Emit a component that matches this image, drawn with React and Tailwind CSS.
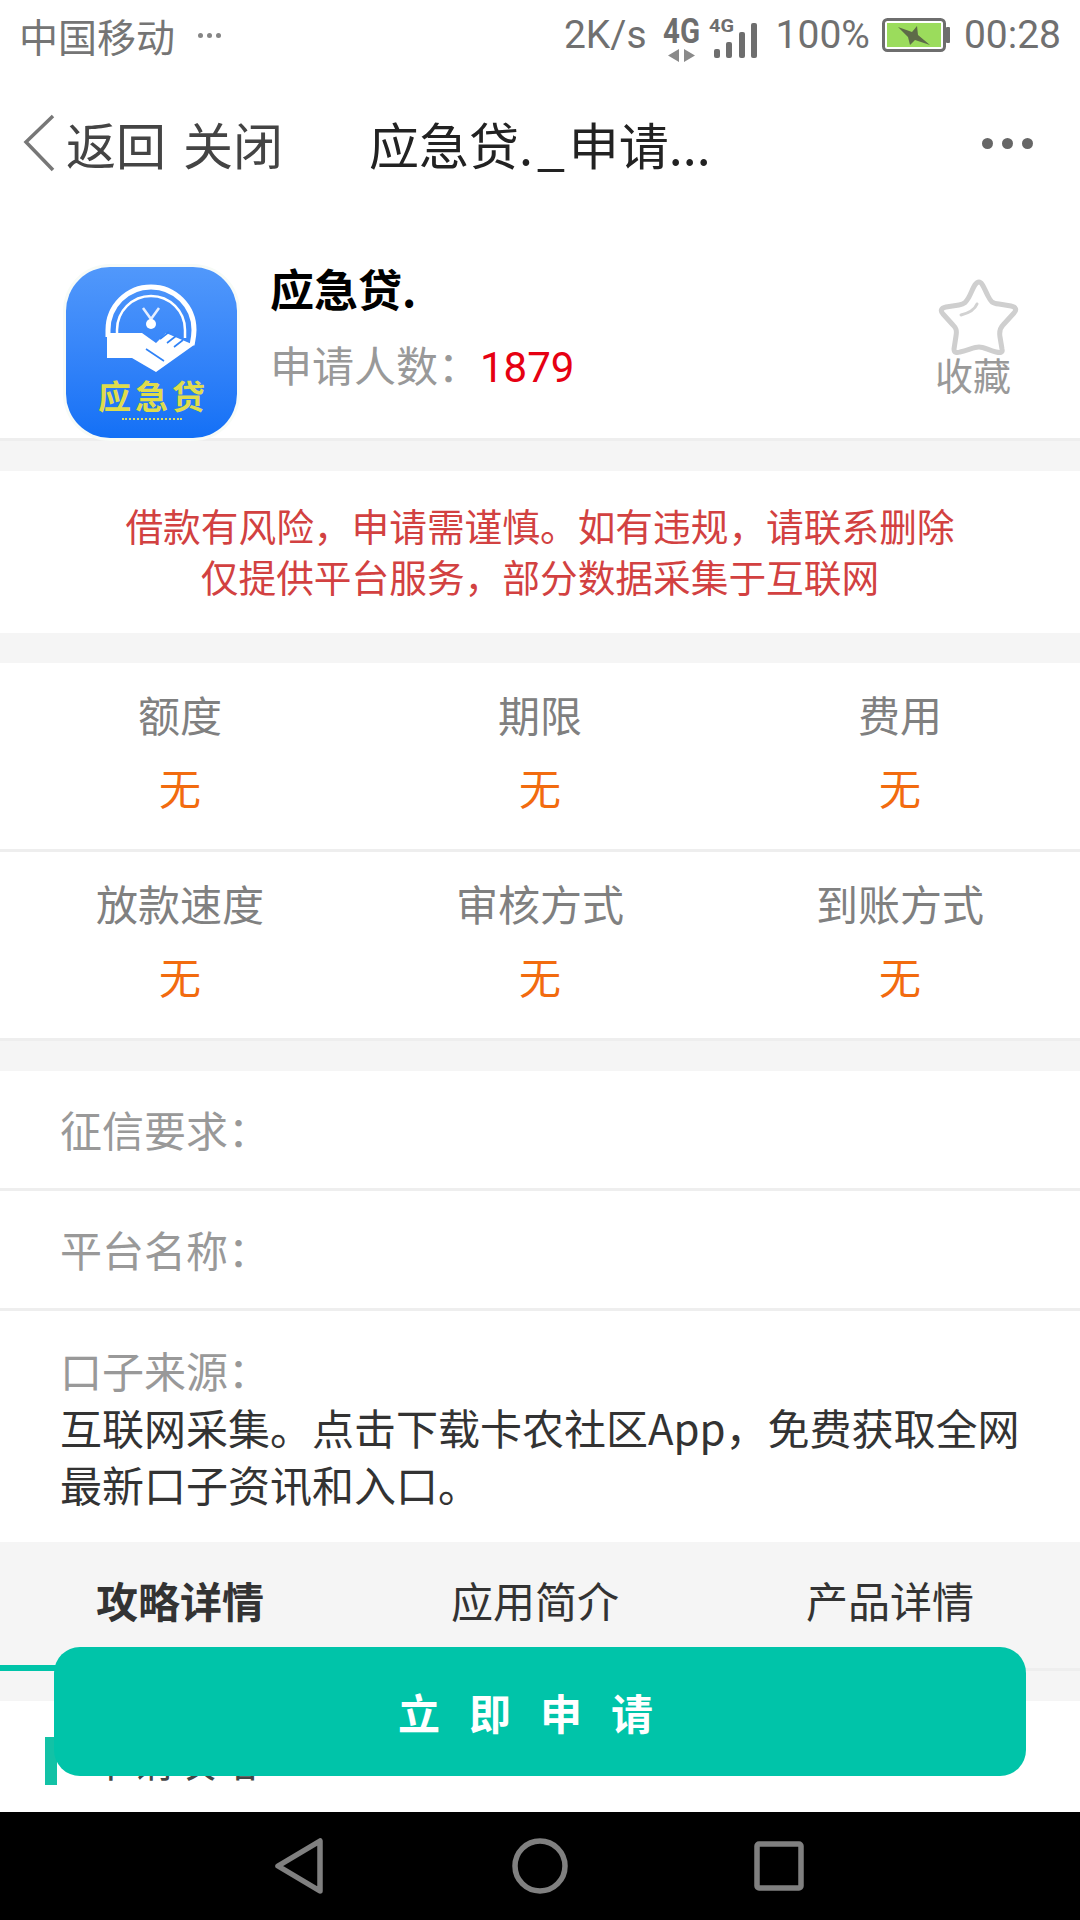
import React from 'react';

const SANS = 'font-["Noto_Sans_CJK_SC","Noto_Sans",sans-serif]';

const terms = [
  ['额度', '期限', '费用'],
  ['放款速度', '审核方式', '到账方式'],
];

function StatusBar() {
  return (
    <div className="h-[70px] flex items-center text-[#757575] shrink-0">
      <span className="ml-[19px] text-[39px] leading-none">中国移动</span>
      <div className="ml-[23px] flex gap-[4px]">
        <i className="w-[5px] h-[5px] rounded-full bg-[#858585]" />
        <i className="w-[5px] h-[5px] rounded-full bg-[#858585]" />
        <i className="w-[5px] h-[5px] rounded-full bg-[#858585]" />
      </div>
      <div className="ml-auto flex items-center font-['Roboto',sans-serif] text-[39px] leading-none text-[#707070]">
        <span>2K/s</span>
        <svg className="ml-[14px]" width="100" height="60" viewBox="0 0 100 60" fill="#6e6e6e">
          <text x="2" y="38" fontFamily="Roboto" fontWeight="700" fontSize="35" textLength="37" lengthAdjust="spacingAndGlyphs">4G</text>
          <path d="M18 44v13l-11-6.500zM23 44v13l11-6.500z" fill="#8a8a8a" />
          <text x="48" y="27" fontFamily="Roboto" fontWeight="700" fontSize="19" textLength="25" lengthAdjust="spacingAndGlyphs">4G</text>
          <rect x="53" y="44" width="6" height="9" rx="2" />
          <rect x="65" y="37" width="6" height="16" rx="2" />
          <rect x="78" y="27" width="6" height="26" rx="2" />
          <rect x="90" y="18" width="6" height="35" rx="2" />
        </svg>
        <span className="ml-[15px]">100%</span>
        <svg className="ml-[12px]" width="70" height="34" viewBox="0 0 70 34">
          <rect x="1.500" y="1.500" width="61" height="31" rx="4" fill="#fff" stroke="#6e6e6e" strokeWidth="3" />
          <rect x="5" y="5" width="54" height="24" fill="#9bdc5c" />
          <rect x="64" y="9" width="4" height="16" rx="1" fill="#6e6e6e" />
          <path d="M16 9l14 5 5-6 1 9 12 10-15-5-5 5-2-8z" fill="#5d6b48" />
        </svg>
        <span className="ml-[12px] mr-[19px]">00:28</span>
      </div>
    </div>
  );
}

function NavBar() {
  return (
    <div className="h-[146px] flex items-center shrink-0">
      <svg className="ml-[22px]" width="34" height="58" viewBox="0 0 34 58" fill="none" stroke="#777" strokeWidth="3.500">
        <path d="M31 2L4 28l27 28" />
      </svg>
      <span className="ml-[10px] text-[50px] leading-none text-[#444]">返回</span>
      <span className="ml-[17px] text-[50px] leading-none text-[#444]">关闭</span>
      <span className="ml-[86px] text-[50px] leading-none text-[#222]">
        应急贷<span className="tracking-[4px]">._</span>申请...
      </span>
      <div className="ml-auto mr-[47px] flex gap-[9px]">
        <i className="w-[11px] h-[11px] rounded-full bg-[#666]" />
        <i className="w-[11px] h-[11px] rounded-full bg-[#666]" />
        <i className="w-[11px] h-[11px] rounded-full bg-[#666]" />
      </div>
    </div>
  );
}

function AppIcon() {
  return (
    <div className="relative w-[171px] h-[171px] rounded-[44px] bg-gradient-to-b from-[#5198fb] to-[#1270f6] shadow-[0_0_0_3px_#f7fbf7] shrink-0">
      <svg width="171" height="130" viewBox="0 0 171 130" className="block">
        <path d="M42 70v-7a43 43 0 0 1 86 0c0 6-1 10-2 15" fill="none" stroke="#fff" strokeWidth="5" />
        <path d="M51 68v-5a34 34 0 0 1 68 0v8" fill="none" stroke="#fff" strokeWidth="2.500" />
        <path d="M41 66h35l14 10 10-10 28 12-38 27-24-14H41z" fill="#fff" />
        <path d="M77 41l8 11 8-11M85 52v4" fill="none" stroke="#e6efff" strokeWidth="2.500" />
        <circle cx="85" cy="57" r="5" fill="#fff" />
        <path d="M94 72l9-7M101 76l9-7M108 80l9-7M80 82l18 12" stroke="#2f82f7" strokeWidth="1.600" />
      </svg>
      <div className="absolute left-0 right-0 top-[110px] pl-[4px] text-center text-[33px] leading-[36px] font-bold tracking-[4px] text-[#dfdc4c]">应急贷</div>
      <div className="absolute left-[56px] top-[151px] w-[60px] border-t-[2px] border-dotted border-[#d8dc62]" />
    </div>
  );
}

function FavStar() {
  return (
    <div className="ml-auto mr-[58px] mt-[11px] flex flex-col items-center">
      <svg className="blur-[0.6px] ml-[14px]" width="84" height="80" viewBox="0 0 84 80" fill="none">
        <path d="M41 4c3 0 5 6 9 14 3 6 4 7 11 8l12 2c5 1 6 4 3 7l-11 12c-3 3-4 6-3 12l2 12c1 4-2 4-6 3-8-2-12-5-17-5s-10 3-19 5c-3 1-6 1-6-3l2-13c1-6 0-8-3-11L5 36c-3-3-2-6 3-7l13-2c6-1 7-3 10-8 4-8 6-15 10-15z" stroke="#cfcfcf" strokeWidth="5" strokeLinejoin="round" />
        <path d="M39 26c-2 5-8 9-16 11" stroke="#d2d2d2" strokeWidth="3" strokeLinecap="round" />
      </svg>
      <span className="mt-[-6px] text-[38px] leading-[44px] text-[#999]">收藏</span>
    </div>
  );
}

export default function App() {
  return (
    <div className={`relative w-[1080px] h-[1920px] overflow-hidden bg-white flex flex-col ${SANS}`}>
      <StatusBar />
      <NavBar />

      <div className="flex-1 min-h-0 overflow-hidden flex flex-col">
        <div className="h-[222px] shrink-0 flex items-start pl-[66px] pt-[51px]">
          <AppIcon />
          <div className="ml-[33px]">
            <div className="mt-[-5px] text-[44px] leading-[52px] font-bold text-black">应急贷.</div>
            <div className="mt-[22px] text-[42px] leading-[56px] text-[#999]">
              {'申请人数\uFF1A'}<span className="font-['Roboto',sans-serif] text-[42px] text-[#e60012]">1879</span>
            </div>
          </div>
          <FavStar />
        </div>

        <div className="h-[33px] shrink-0 bg-[#f5f5f5] border-t-[3px] border-[#eeeeee]" />

        <div className="h-[162px] shrink-0 flex flex-col items-center justify-center pb-[4px] text-[37.7px] leading-[51px] text-[#d24141]">
          <div>{'借款有风险\uFF0C申请需谨慎。如有违规\uFF0C请联系删除'}</div>
          <div>{'仅提供平台服务\uFF0C部分数据采集于互联网'}</div>
        </div>

        <div className="h-[30px] shrink-0 bg-[#f5f5f5]" />

        {terms.map((row) => (
          <div key={row[0]} className="grid grid-cols-3 h-[186px] shrink-0 box-content border-b-[3px] border-[#eeeeee]">
            {row.map((label) => (
              <div key={label} className="flex flex-col items-center pt-[23px]">
                <span className="text-[42px] leading-[56px] text-[#808080]">{label}</span>
                <span className="mt-[17px] text-[42px] leading-[56px] text-[#f26b0f]">无</span>
              </div>
            ))}
          </div>
        ))}

        <div className="h-[30px] shrink-0 bg-[#f5f5f5]" />

        <div className="h-[120px] shrink-0 flex items-center pl-[60px] pb-[1px] border-b-[3px] border-[#eeeeee] text-[42px] leading-[56px] text-[#999]">{'征信要求\uFF1A'}</div>
        <div className="h-[120px] shrink-0 flex items-center pl-[60px] pb-[1px] border-b-[3px] border-[#eeeeee] text-[42px] leading-[56px] text-[#999]">{'平台名称\uFF1A'}</div>
        <div className="h-[231px] shrink-0 pl-[60px] pt-[30px] text-[42px] leading-[57px]">
          <div className="text-[#999]">{'口子来源\uFF1A'}</div>
          <div className="text-[#333]">{'互联网采集。点击下载卡农社区App\uFF0C免费获取全网'}</div>
          <div className="text-[#333]">最新口子资讯和入口。</div>
        </div>

        <div className="h-[159px] shrink-0 bg-[#f5f5f5]">
          <div className="h-[129px] flex border-b-[3px] border-[#eeeeee] text-[42px] leading-[56px] text-[#333]">
            <div className="w-[360px] h-[129px] border-b-[6px] border-[#00c4a9] pt-[30px] text-center font-bold">攻略详情</div>
            <div className="w-[350px] pt-[30px] text-center">应用简介</div>
            <div className="w-[360px] pt-[30px] text-center">产品详情</div>
          </div>
        </div>

        <div className="flex-1 flex items-start pt-[36px] pl-[45px]">
          <div className="w-[12px] h-[48px] bg-[#12c2a6]" />
          <span className="ml-[33px] mt-[-2px] text-[42px] leading-[48px] text-[#444]">申请攻略</span>
        </div>
      </div>

      <div className="h-[108px] shrink-0 bg-black flex items-center pl-[274px]">
        <svg width="50" height="56" viewBox="0 0 50 56" fill="none" stroke="#808080" strokeWidth="5.500" strokeLinejoin="round">
          <path d="M46 3v50L4 28z" />
        </svg>
        <svg className="ml-[188px]" width="56" height="56" viewBox="0 0 56 56" fill="none" stroke="#808080" strokeWidth="5.500">
          <circle cx="28" cy="28" r="25" />
        </svg>
        <svg className="ml-[186px]" width="50" height="50" viewBox="0 0 50 50" fill="none" stroke="#808080" strokeWidth="5.500" strokeLinejoin="round">
          <rect x="3" y="3" width="44" height="44" rx="2" />
        </svg>
      </div>

      <button className="absolute left-[54px] top-[1647px] w-[972px] h-[129px] rounded-[26px] bg-[#00c4a9] text-white text-[42px] font-bold tracking-[29px]">
        立即申请
      </button>
    </div>
  );
}
